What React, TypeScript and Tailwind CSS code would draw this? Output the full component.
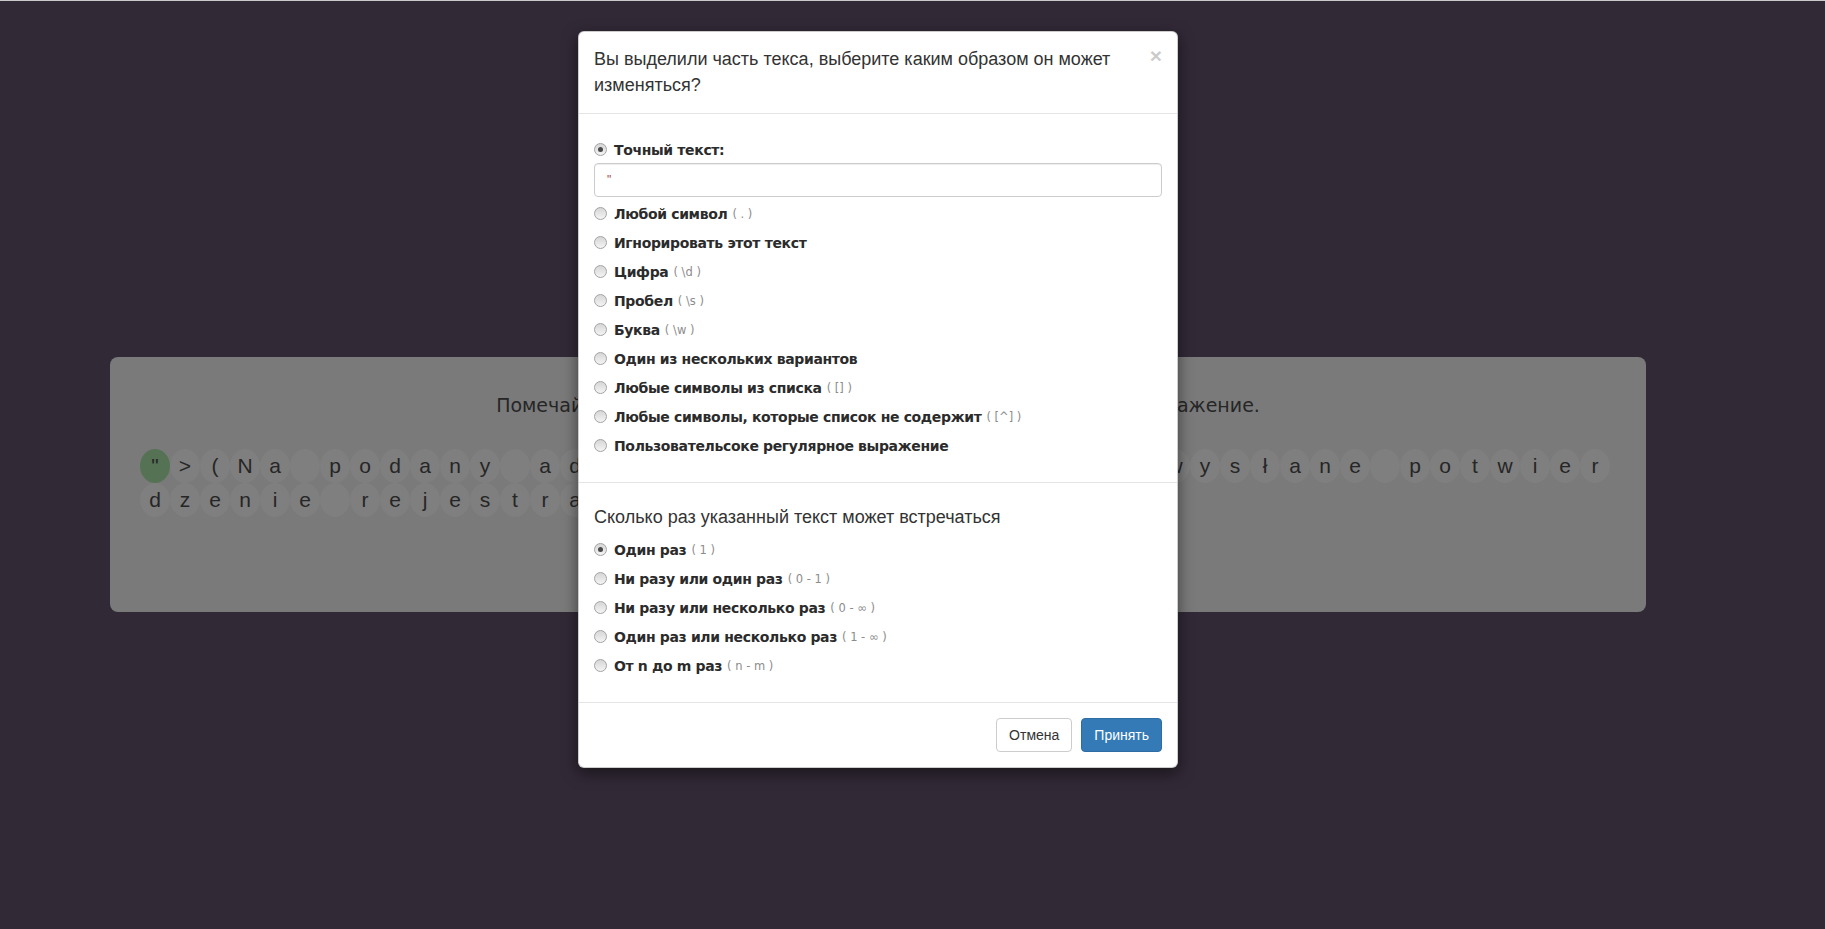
import React from 'react';

const row1 = '">(Na podany adres e-mail zostało wysłane potwier';
const row2 = 'dzenie rejestracji)';

type Opt = { label: string; hint?: string; checked?: boolean };

const patternOptions: Opt[] = [
  { label: 'Любой символ', hint: '( . )' },
  { label: 'Игнорировать этот текст' },
  { label: 'Цифра', hint: '( \\d )' },
  { label: 'Пробел', hint: '( \\s )' },
  { label: 'Буква', hint: '( \\w )' },
  { label: 'Один из нескольких вариантов' },
  { label: 'Любые символы из списка', hint: '( [] )' },
  { label: 'Любые символы, которые список не содержит', hint: '( [^] )' },
  { label: 'Пользовательсоке регулярное выражение' },
];

const countOptions: Opt[] = [
  { label: 'Один раз', hint: '( 1 )', checked: true },
  { label: 'Ни разу или один раз', hint: '( 0 - 1 )' },
  { label: 'Ни разу или несколько раз', hint: '( 0 - ∞ )' },
  { label: 'Один раз или несколько раз', hint: '( 1 - ∞ )' },
  { label: 'От n до m раз', hint: '( n - m )' },
];

const Radio = ({ checked }: { checked?: boolean }) => (
  <span className="relative -top-px flex h-[13px] w-[13px] shrink-0 items-center justify-center rounded-full border border-[#a3a3a3] bg-gradient-to-b from-[#d6d6d6] to-[#f4f4f4]">
    {checked && <span className="h-[5px] w-[5px] rounded-full bg-[#4a4a4a]" />}
  </span>
);

const RadioRow = ({ opt }: { opt: Opt }) => (
  <label className="flex h-6 items-center">
    <Radio checked={opt.checked} />
    <span className="ml-[7px] font-['DejaVu_Sans',sans-serif] text-[14px] font-bold tracking-[-0.35px] text-[#2b2b2b]">
      {opt.label}
    </span>
    {opt.hint && (
      <span className="ml-[5px] font-['DejaVu_Sans',sans-serif] text-[11.5px] text-[#8c8c8c]">{opt.hint}</span>
    )}
  </label>
);

export default function App() {
  return (
    <div className="relative h-[929px] w-full overflow-hidden bg-[#312936]">
      <div className="h-px w-full bg-[#c9c9c9]" />

      {/* page panel behind the backdrop */}
      <div className="ml-[110px] mt-[356px] h-[255px] w-[1536px] rounded-lg bg-[#7a7a7a] px-[30px] pt-[32px]">
        <div className="h-8 whitespace-nowrap text-center font-['DejaVu_Sans',sans-serif] text-[19px] leading-8 text-[#262626]">
          Помечайте мышкой части текста, чтобы составить регулярное выражение.
        </div>
        <div className="mt-[28px] flex flex-wrap font-['Liberation_Sans',Arial,sans-serif] text-[21px] text-[#262626]">
          {[...row1, ...row2].map((ch, i) => (
            <span
              key={i}
              className={`flex h-[34px] w-[30px] items-center justify-center rounded-[50%] ${
                i === 0 ? 'bg-[#557354]' : 'bg-[#7f7f7f]'
              }`}
            >
              {ch === ' ' ? '\u00a0' : ch}
            </span>
          ))}
        </div>
      </div>

      {/* modal */}
      <div className="absolute left-[578px] top-[31px] w-[600px] rounded-md border border-black/20 bg-white font-['Liberation_Sans',Arial,sans-serif] text-[#333] shadow-[0_5px_15px_rgba(0,0,0,0.5)]">
        <div className="flex border-b border-[#e5e5e5] p-[15px]">
          <h4 className="flex-1 text-[18px] leading-[25.7px]">
            Вы выделили часть текса, выберите каким образом он может
            <br />
            изменяться?
          </h4>
          <button className="-mt-0.5 self-start text-[21px] font-bold leading-none text-black opacity-20">×</button>
        </div>

        <div className="px-[15px] pt-[15px] pb-[15px]">
          <div className="-mx-[15px] border-b border-[#e5e5e5] px-[15px] pb-[24px]">
            <div className="mt-[9px]">
              <RadioRow opt={{ label: 'Точный текст:', checked: true }} />
            </div>
            <div className="mt-px flex h-[34px] items-center rounded border border-[#ccc] px-3 shadow-[inset_0_1px_1px_rgba(0,0,0,0.075)]">
              <span className="text-[12px] text-[#a94442]">"</span>
            </div>
            <div className="mt-[5px] flex flex-col gap-[5px]">
              {patternOptions.map((o) => (
                <RadioRow key={o.label} opt={o} />
              ))}
            </div>
          </div>

          <div className="pb-[9px]">
            <div className="mt-[24px] text-[18px] leading-5">Сколько раз указанный текст может встречаться</div>
            <div className="mt-[11px] flex flex-col gap-[5px]">
              {countOptions.map((o) => (
                <RadioRow key={o.label} opt={o} />
              ))}
            </div>
          </div>
        </div>

        <div className="flex justify-end gap-[9px] border-t border-[#e5e5e5] p-[15px]">
          <button className="h-[34px] rounded border border-[#ccc] bg-white px-3 text-[14px] text-[#333]">Отмена</button>
          <button className="h-[34px] rounded border border-[#2e6da4] bg-[#337ab7] px-3 text-[14px] text-white">Принять</button>
        </div>
      </div>
    </div>
  );
}
